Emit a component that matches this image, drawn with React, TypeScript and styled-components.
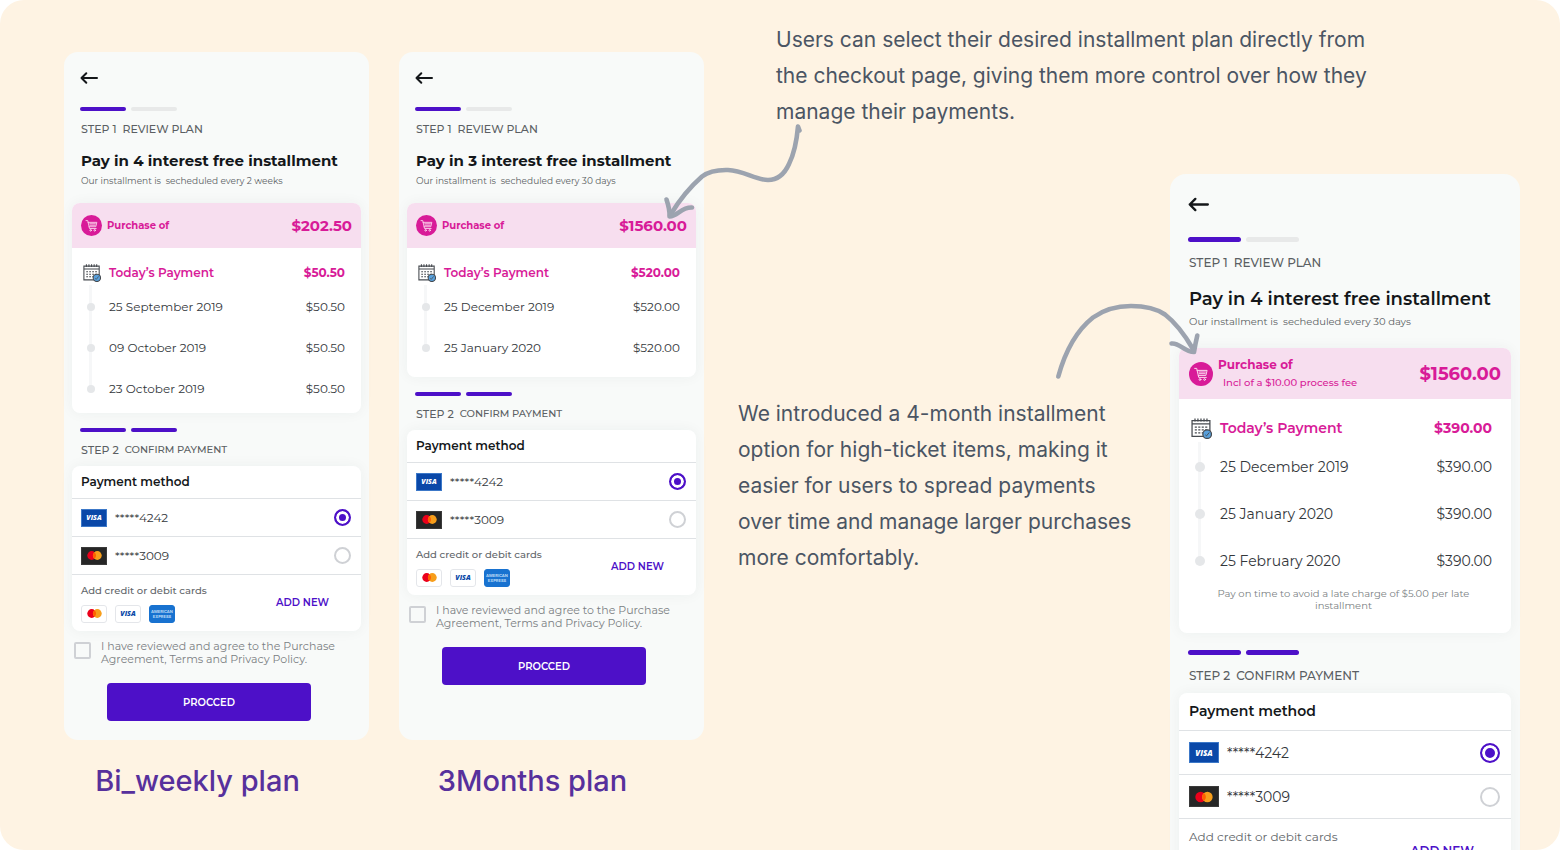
import React, { useId } from "react";
import styled, { createGlobalStyle, css, ThemeProvider } from "styled-components";

const compact = {
  radius: 14,
  padTop: 18, padBottom: 19, gutter: 16, cardGutter: 8,
  back: 16, backIcon: 18, barsTop: 21, barH: 4, barW: 46, barGap: 5,
  stepTop: 10, stepSize: 11, confirmSize: 10, stepLine: 16,
  titleTop: 14, titleSize: 15, titleWeight: 700, titleLine: 20,
  subTop: 4, subSize: 9, subLine: 12, cardTop: 16,
  headH: 45, headPad: 9, cart: 21, headSize: 10, headSub: 9, headLine: 14, totalSize: 15,
  todayTop: 11, todayH: 27, rowH: 41, rowSize: 12, iconCol: 37, amountPad: 16, calendar: 18, dot: 8, dotLeft: 15,
  secondBars: 15, payTop: 8, payHead: 33, payRow: 38, paySize: 12,
  brandW: 26, brandH: 18, brandText: 7, radio: 17,
  addH: 56, addGap: 7, addSize: 10, addWeight: 500, addLine: 14, newSize: 10, newPad: 32,
};

const large: typeof compact = {
  radius: 16,
  padTop: 20, padBottom: 22, gutter: 18, cardGutter: 9,
  back: 20, backIcon: 21, barsTop: 23, barH: 5, barW: 53, barGap: 5,
  stepTop: 12, stepSize: 12, confirmSize: 12, stepLine: 18,
  titleTop: 15, titleSize: 18, titleWeight: 600, titleLine: 24,
  subTop: 4, subSize: 10, subLine: 14, cardTop: 19,
  headH: 51, headPad: 10, cart: 24, headSize: 12, headSub: 10, headLine: 18, totalSize: 18,
  todayTop: 14, todayH: 30, rowH: 47, rowSize: 14, iconCol: 41, amountPad: 19, calendar: 21, dot: 10, dotLeft: 16,
  secondBars: 17, payTop: 8, payHead: 38, payRow: 44, paySize: 14,
  brandW: 30, brandH: 21, brandText: 8, radio: 20,
  addH: 64, addGap: 8, addSize: 12, addWeight: 400, addLine: 16, newSize: 12, newPad: 37,
};

type Metrics = typeof compact;

declare module "styled-components" {
  export interface DefaultTheme extends Metrics {}
}

const violet = "#4d10c8";
const pink = "#d81b98";
const rule = "#dfe2e5";

const GlobalStyle = createGlobalStyle`
  *, *::before, *::after { box-sizing: border-box; }
  body { margin: 0; background: #fff; font-family: Montserrat, Inter, "Liberation Sans", sans-serif; }
  h1, h2, p { margin: 0; }
  button, input { font: inherit; }
`;

const Board = styled.main`
  height: 100vh;
  overflow: hidden;
  display: grid;
  grid-template-columns: 305fr 305fr 786fr;
  column-gap: 30px;
  align-items: start;
  padding: 0 40px 0 64px;
  border-radius: 24px;
  background: #fef3e3;
`;

const Plan = styled.figure`
  margin: 0;
  padding-top: 52px;
`;

const PlanName = styled.figcaption`
  margin-top: 21px;
  padding-right: 38px;
  text-align: center;
  font: 500 29px/40px Inter, "Liberation Sans", sans-serif;
  color: #57309c;
`;

const Story = styled.section`
  min-width: 0;
`;

const Note = styled.p`
  font: 400 21px/36px Inter, "Liberation Sans", sans-serif;
  color: #4b5563;
`;

const Intro = styled.div`
  position: relative;
  width: 660px;
  max-width: 100%;
  margin-bottom: 44px;
  padding: 22px 0 0 42px;
`;

const Detail = styled.div`
  display: grid;
  grid-template-columns: 436fr 350fr;
  align-items: start;
`;

const DetailNote = styled.div`
  padding: 222px 32px 0 4px;
`;

const DetailPhone = styled.div`
  position: relative;
`;

const Arrow = styled.svg<{ $left: number; $top: number }>`
  position: absolute;
  left: ${(p) => p.$left}px;
  top: ${(p) => p.$top}px;
  fill: none;
  stroke: #9ca3af;
  stroke-width: 4.6;
  stroke-linecap: round;
  stroke-linejoin: round;
  pointer-events: none;
`;

const Phone = styled.article<{ $fill?: boolean }>`
  min-height: ${(p) => (p.$fill ? 688 : 0)}px;
  padding: ${({ theme }) => `${theme.padTop}px ${theme.cardGutter}px ${theme.padBottom}px`};
  border-radius: ${({ theme }) => theme.radius}px;
  background: #f8faf9;
`;

const Inset = styled.header`
  padding: 0 ${({ theme }) => theme.gutter - theme.cardGutter}px;
`;

const Back = styled.button`
  display: flex;
  align-items: center;
  height: ${({ theme }) => theme.back}px;
  padding: 0;
  border: 0;
  background: none;
  color: #14171a;
`;

const Bars = styled.div<{ $top: number }>`
  display: flex;
  gap: ${({ theme }) => theme.barGap}px;
  margin-top: ${(p) => p.$top}px;
`;

const Bar = styled.span<{ $on: boolean }>`
  width: ${({ theme }) => theme.barW}px;
  height: ${({ theme }) => theme.barH}px;
  border-radius: 3px;
  background: ${(p) => (p.$on ? violet : "#e8e9e9")};
`;

const Step = styled.p`
  display: flex;
  gap: 6px;
  margin-top: ${({ theme }) => theme.stepTop}px;
  padding-left: 1px;
  font-size: ${({ theme }) => theme.stepSize}px;
  line-height: ${({ theme }) => theme.stepLine}px;
  font-weight: 500;
  color: #5b5f63;
`;

const Confirm = styled.span`
  font-size: ${({ theme }) => theme.confirmSize}px;
`;

const Title = styled.h2`
  margin-top: ${({ theme }) => theme.titleTop}px;
  padding-left: 1px;
  font-size: ${({ theme }) => theme.titleSize}px;
  line-height: ${({ theme }) => theme.titleLine}px;
  font-weight: ${({ theme }) => theme.titleWeight};
  white-space: nowrap;
  color: #14171a;
`;

const Sub = styled.p`
  margin-top: ${({ theme }) => theme.subTop}px;
  padding-left: 1px;
  font-size: ${({ theme }) => theme.subSize}px;
  line-height: ${({ theme }) => theme.subLine}px;
  white-space: pre;
  color: #5b5f63;
`;

const Card = styled.section<{ $top: number }>`
  margin-top: ${(p) => p.$top}px;
  overflow: hidden;
  border-radius: 8px;
  background: #fff;
  box-shadow: 0 0 14px rgba(40, 50, 60, 0.05);
`;

const Purchase = styled.div`
  display: flex;
  align-items: center;
  gap: 5px;
  height: ${({ theme }) => theme.headH}px;
  padding: 0 ${({ theme }) => theme.headPad}px;
  background: #f7deef;
  color: ${pink};
`;

const PurchaseText = styled.div`
  flex: 1;
  font-size: ${({ theme }) => theme.headSize}px;
  line-height: ${({ theme }) => theme.headLine}px;
  font-weight: 700;
`;

const Fee = styled.p`
  padding-left: 5px;
  font-size: ${({ theme }) => theme.headSub}px;
  font-weight: 500;
`;

const Total = styled.strong`
  font-size: ${({ theme }) => theme.totalSize}px;
  font-weight: 700;
`;

const Schedule = styled.table<{ $tail: number }>`
  width: 100%;
  margin: ${({ theme }) => theme.todayTop}px 0 ${(p) => p.$tail}px;
  border-collapse: collapse;
  font-size: ${({ theme }) => theme.rowSize}px;
  color: #33373b;
`;

const Mark = styled.td<{ $line?: "short" | "full" }>`
  position: relative;
  width: ${({ theme }) => theme.iconCol}px;
  padding: 0;
  ${(p) =>
    p.$line &&
    css`
      &::before {
        content: "";
        position: absolute;
        left: ${p.theme.dotLeft + p.theme.dot / 2 - 2}px;
        bottom: 50%;
        width: 3px;
        height: ${p.$line === "full" ? p.theme.rowH : p.theme.calendar + 4}px;
        background: #f6f7f8;
      }
      &::after {
        content: "";
        position: absolute;
        top: calc(50% - ${p.theme.dot / 2}px);
        left: ${p.theme.dotLeft}px;
        width: ${p.theme.dot}px;
        height: ${p.theme.dot}px;
        border-radius: 50%;
        background: #e5e7e9;
        z-index: 1;
      }
    `}
`;

const CalendarSlot = styled.span`
  display: flex;
  padding-left: ${({ theme }) => theme.headPad + 2}px;
`;

const Due = styled.th<{ $today?: boolean }>`
  height: ${({ theme, $today }) => ($today ? theme.todayH : theme.rowH)}px;
  padding: 0;
  text-align: left;
  font-weight: ${(p) => (p.$today ? 600 : 400)};
  color: ${(p) => (p.$today ? pink : "inherit")};
`;

const Amount = styled.td<{ $today?: boolean }>`
  padding: 0 ${({ theme }) => theme.amountPad}px 0 0;
  text-align: right;
  font-weight: ${(p) => (p.$today ? 700 : 400)};
  color: ${(p) => (p.$today ? pink : "inherit")};
`;

const LateFee = styled.p`
  padding: 4px 40px 21px 37px;
  text-align: center;
  font-size: 10px;
  line-height: 12px;
  color: #7b7f83;
`;

const PayHead = styled.h2`
  height: ${({ theme }) => theme.payHead}px;
  padding: 0 ${({ theme }) => theme.headPad}px;
  border-bottom: 1px solid ${rule};
  font-size: ${({ theme }) => theme.paySize}px;
  line-height: ${({ theme }) => theme.payHead - 1}px;
  font-weight: 600;
  color: #14171a;
`;

const PayOption = styled.label`
  display: flex;
  align-items: center;
  gap: 8px;
  height: ${({ theme }) => theme.payRow}px;
  padding: 0 ${({ theme }) => theme.headPad + 1}px 0 ${({ theme }) => theme.headPad}px;
  border-bottom: 1px solid ${rule};
  font-size: ${({ theme }) => theme.rowSize}px;
  color: #33373b;
`;

const CardNumber = styled.span`
  flex: 1;
`;

const Radio = styled.input`
  appearance: none;
  width: ${({ theme }) => theme.radio}px;
  height: ${({ theme }) => theme.radio}px;
  margin: 0;
  border: 2px solid #cfd1d5;
  border-radius: 50%;
  background: #fff;
  &:checked {
    border-color: ${violet};
    background: ${violet};
    box-shadow: inset 0 0 0 3px #fff;
  }
`;

const brandLook = {
  visa: css`background: #0a48a8; color: #fff; border-color: #3c78c8;`,
  visaLight: css`background: #fff; color: #0a48a8; border-color: #e4e6ea; border-radius: 3px;`,
  master: css`background: #262626; border-color: #3a3a3a;`,
  masterLight: css`background: #fff; border-color: #e4e6ea; border-radius: 3px;`,
  amex: css`background: #1872d0; color: #b9d8f6; border-color: #1872d0; border-radius: 3px;`,
};

const BrandBox = styled.span<{ $look: keyof typeof brandLook }>`
  display: flex;
  align-items: center;
  justify-content: center;
  flex: none;
  width: ${({ theme }) => theme.brandW}px;
  height: ${({ theme }) => theme.brandH}px;
  overflow: hidden;
  border: 1px solid;
  font: italic 800 ${({ theme }) => theme.brandText}px/1 "Open Sans", sans-serif;
  ${(p) => brandLook[p.$look]}
`;

const AddRow = styled.div`
  display: flex;
  align-items: center;
  justify-content: space-between;
  height: ${({ theme }) => theme.addH}px;
  padding: 0 ${({ theme }) => theme.newPad}px 0 ${({ theme }) => theme.headPad}px;
  font-size: ${({ theme }) => theme.addSize}px;
  line-height: ${({ theme }) => theme.addLine}px;
  font-weight: ${({ theme }) => theme.addWeight};
  color: #62666a;
`;

const Accepted = styled.div`
  display: flex;
  gap: 8px;
  margin-top: ${({ theme }) => theme.addGap}px;
`;

const AddNew = styled.button`
  padding: 0;
  border: 0;
  background: none;
  font-size: ${({ theme }) => theme.newSize}px;
  font-weight: 600;
  color: ${violet};
`;

const Agree = styled.label`
  display: flex;
  gap: 10px;
  margin-top: 9px;
  padding-left: 2px;
  font-size: 11px;
  line-height: 13px;
  color: #7b7f83;
`;

const Check = styled.input`
  appearance: none;
  flex: none;
  width: 17px;
  height: 17px;
  margin: 2px 0 0;
  border: 2px solid #cfd1d5;
  border-radius: 2px;
  &:checked { background: ${violet}; }
`;

const AgreeText = styled.span`
  max-width: 246px;
`;

const Proceed = styled.button`
  display: block;
  width: calc(100% - 85px);
  height: 38px;
  margin: 17px 0 0 35px;
  border: 0;
  border-radius: 4px;
  background: ${violet};
  color: #fff;
  font-size: 10px;
  font-weight: 600;
`;

function BackArrow({ size }: { size: number }) {
  return (
    <svg width={size} height={size} viewBox="0 0 18 18" fill="none" stroke="currentColor" strokeWidth="2" strokeLinecap="round" strokeLinejoin="round" aria-hidden="true">
      <path d="M17 9H1.5M6.3 4.2 1.5 9l4.8 4.8" />
    </svg>
  );
}

function Cart({ size }: { size: number }) {
  return (
    <svg width={size} height={size} viewBox="0 0 24 24" fill="none" stroke="#fbd9ee" strokeWidth="1" strokeLinecap="round" strokeLinejoin="round" aria-hidden="true">
      <circle cx="12" cy="12" r="12" fill={pink} stroke="none" />
      <path d="M5.7 6.4h2l2 9h7.600M8.100 8.400h10l-1.200 5H9.300M10 10h6.500M10.200 11.700h6" />
      <circle cx="11" cy="17.5" r=".9" />
      <circle cx="15.6" cy="17.5" r=".9" />
    </svg>
  );
}

function Calendar({ size }: { size: number }) {
  return (
    <svg width={size} height={size} viewBox="0 0 20 20" fill="none" stroke="#474b50" strokeWidth="1.2" aria-hidden="true">
      <path d="M1 2.4h17v15.2H1zM1 5.6h17" />
      <path d="M3.8.4v3M6.6.4v3M9.5.4v3M12.4.4v3M15.2.4v3" />
      <path d="M3.6 8.6h12M3.6 11.4h12M3.6 14.2h8" strokeDasharray="2 1.3" />
      <circle cx="15.4" cy="15.4" r="4.1" fill="#58a0dc" />
      <path d="m13.6 16 1.2 1 2.6-3.2" strokeWidth=".9" />
    </svg>
  );
}

function Circles({ width }: { width: number }) {
  return (
    <svg width={width} height={width} viewBox="0 0 16 16" aria-hidden="true">
      <circle cx="5" cy="8" r="4.7" fill="#eb001b" />
      <circle cx="11" cy="8" r="4.7" fill="#f79e1b" />
      <path d="M8 4.4a4.7 4.7 0 0 1 0 7.2 4.7 4.7 0 0 1 0-7.2z" fill="#ff5f00" />
    </svg>
  );
}

const AmexText = styled.span`
  font: 700 4px/5px Inter, sans-serif;
  text-align: center;
`;

type PlanData = {
  title: string;
  every: string;
  total: string;
  amount: string;
  dates: string[];
  tail: number;
  fee?: string;
  late?: string;
  size: Metrics;
};

function PlanPhone({ plan, fill }: { plan: PlanData; fill?: boolean }) {
  const group = useId();
  const t = plan.size;
  return (
    <ThemeProvider theme={t}>
      <Phone $fill={fill}>
        <Inset>
          <Back type="button" aria-label="Back"><BackArrow size={t.backIcon} /></Back>
          <Bars $top={t.barsTop}><Bar $on /><Bar $on={false} /></Bars>
          <Step><span>STEP 1</span><span>REVIEW PLAN</span></Step>
          <Title>{plan.title}</Title>
          <Sub>{`Our installment is  secheduled every ${plan.every}`}</Sub>
        </Inset>
        <Card $top={t.cardTop}>
          <Purchase>
            <Cart size={t.cart} />
            <PurchaseText>
              Purchase of
              {plan.fee && <Fee>{plan.fee}</Fee>}
            </PurchaseText>
            <Total>{plan.total}</Total>
          </Purchase>
          <Schedule $tail={plan.tail}>
            <tbody>
              <tr>
                <Mark><CalendarSlot><Calendar size={t.calendar} /></CalendarSlot></Mark>
                <Due scope="row" $today>Today’s Payment</Due>
                <Amount $today>{plan.amount}</Amount>
              </tr>
              {plan.dates.map((date, i) => (
                <tr key={date}>
                  <Mark $line={i ? "full" : "short"} />
                  <Due scope="row">{date}</Due>
                  <Amount>{plan.amount}</Amount>
                </tr>
              ))}
            </tbody>
          </Schedule>
          {plan.late && <LateFee>{plan.late}</LateFee>}
        </Card>
        <Inset as="div">
          <Bars $top={t.secondBars}><Bar $on /><Bar $on /></Bars>
          <Step><span>STEP 2</span><Confirm>CONFIRM PAYMENT</Confirm></Step>
        </Inset>
        <Card $top={t.payTop}>
          <PayHead>Payment method</PayHead>
          <PayOption>
            <BrandBox $look="visa">VISA</BrandBox>
            <CardNumber>*****4242</CardNumber>
            <Radio type="radio" name={group} defaultChecked />
          </PayOption>
          <PayOption>
            <BrandBox $look="master"><Circles width={t.radio - 2} /></BrandBox>
            <CardNumber>*****3009</CardNumber>
            <Radio type="radio" name={group} />
          </PayOption>
          <AddRow>
            <div>
              Add credit or debit cards
              <Accepted>
                <BrandBox $look="masterLight"><Circles width={t.radio - 2} /></BrandBox>
                <BrandBox $look="visaLight">VISA</BrandBox>
                <BrandBox $look="amex"><AmexText>AMERICAN EXPRESS</AmexText></BrandBox>
              </Accepted>
            </div>
            <AddNew type="button">ADD NEW</AddNew>
          </AddRow>
        </Card>
        <Agree>
          <Check type="checkbox" />
          <AgreeText>I have reviewed and agree to the Purchase Agreement, Terms and Privacy Policy.</AgreeText>
        </Agree>
        <Proceed type="button">PROCCED</Proceed>
      </Phone>
    </ThemeProvider>
  );
}

const biWeekly: PlanData = {
  title: "Pay in 4 interest free installment",
  every: "2 weeks",
  total: "$202.50",
  amount: "$50.50",
  dates: ["25 September 2019", "09 October 2019", "23 October 2019"],
  tail: 4,
  size: compact,
};

const threeMonths: PlanData = {
  title: "Pay in 3 interest free installment",
  every: "30 days",
  total: "$1560.00",
  amount: "$520.00",
  dates: ["25 December 2019", "25 January 2020"],
  tail: 9,
  size: compact,
};

const fourMonths: PlanData = {
  title: "Pay in 4 interest free installment",
  every: "30 days",
  total: "$1560.00",
  amount: "$390.00",
  dates: ["25 December 2019", "25 January 2020", "25 February 2020"],
  tail: 0,
  fee: "Incl of a $10.00 process fee",
  late: "Pay on time to avoid a late charge of $5.00 per late installment",
  size: large,
};

export default function App() {
  return (
    <>
      <GlobalStyle />
      <Board>
        <Plan>
          <PlanPhone plan={biWeekly} fill />
          <PlanName>Bi_weekly plan</PlanName>
        </Plan>
        <Plan>
          <PlanPhone plan={threeMonths} fill />
          <PlanName>3Months plan</PlanName>
        </Plan>
        <Story>
          <Intro>
            <Note>
              Users can select their desired installment plan directly from the checkout page, giving
              them more control over how they manage their payments.
            </Note>
            <Arrow $left={-74} $top={120} width="144" height="104" viewBox="660 120 144 104" aria-hidden="true">
              <path d="M799.5 130.5 798 126.5C797 138 795 152 789 164C784 175 777 180 768 180C755 180 744 170.5 728 170C717 169.7 709 171 702 176.5C690 187 680 199 671 214" />
              <path d="M666.5 199.5C668 204 670 210 669.5 216.5C678 216 681 207 692 207.5" />
            </Arrow>
          </Intro>
          <Detail>
            <DetailNote>
              <Note>
                We introduced a 4-month installment option for high-ticket items, making it easier for
                users to spread payments over time and manage larger purchases more comfortably.
              </Note>
            </DetailNote>
            <DetailPhone>
              <PlanPhone plan={fourMonths} />
              <Arrow $left={-118} $top={126} width="152" height="84" viewBox="1052 300 152 84" aria-hidden="true">
                <path d="M1058.3 376.5C1065 352 1076 331 1093 317.5C1104 309.5 1117 306 1131 306C1145 306 1157 309 1165 314.5C1176 323 1186 337 1193 349" />
                <path d="M1171.5 343.5C1180 342.5 1184 352 1194 352C1195 346 1196 341 1197.3 335.5" />
              </Arrow>
            </DetailPhone>
          </Detail>
        </Story>
      </Board>
    </>
  );
}
